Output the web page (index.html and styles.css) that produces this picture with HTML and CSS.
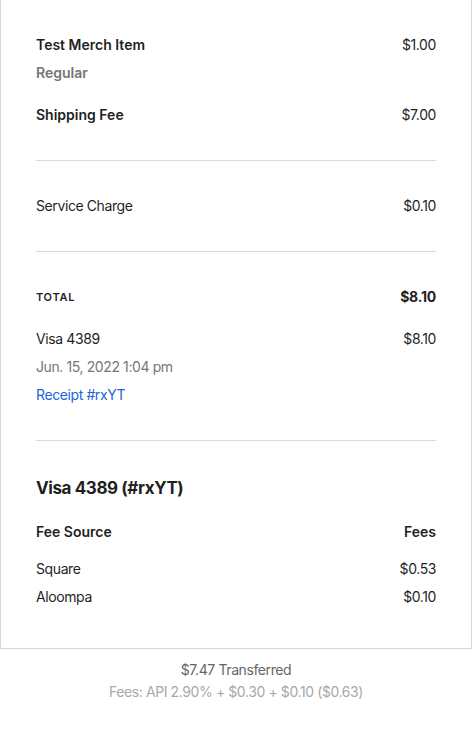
FILE: index.html
```html
<!DOCTYPE html>
<html>
<head>
<meta charset="utf-8">
<link rel="stylesheet" href="styles.css">
</head>
<body>
<div class="card">
  <section class="section">
    <div class="row strong"><span>Test Merch Item</span><span class="amt">$1.00</span></div>
    <div class="row sub"><span>Regular</span></div>
    <div class="row strong gap-lg"><span>Shipping Fee</span><span class="amt">$7.00</span></div>
  </section>
  <section class="section">
    <div class="row"><span>Service Charge</span><span>$0.10</span></div>
  </section>
  <section class="section">
    <div class="row total"><span class="total-label">TOTAL</span><span class="total-amt">$8.10</span></div>
    <div class="row gap-lg"><span>Visa 4389</span><span>$8.10</span></div>
    <div class="row muted"><span>Jun. 15, 2022 1:04 pm</span></div>
    <div class="row"><a class="link" href="#">Receipt #rxYT</a></div>
  </section>
  <section class="section last">
    <h2 class="heading">Visa 4389 (#rxYT)</h2>
    <div class="row strong head-row"><span>Fee Source</span><span>Fees</span></div>
    <div class="row fee-first"><span>Square</span><span>$0.53</span></div>
    <div class="row"><span>Aloompa</span><span>$0.10</span></div>
  </section>
</div>
<div class="footer">
  <div class="transferred">$7.47 Transferred</div>
  <div class="fees">Fees: API 2.90% + $0.30 + $0.10 ($0.63)</div>
</div>
</body>
</html>
```
FILE: styles.css
```css
* { box-sizing: border-box; }
html, body { margin: 0; padding: 0; background: #fff; }
body {
  font-family: Inter, "Noto Sans", "Liberation Sans", sans-serif;
  font-size: 14px;
  line-height: 20px;
  color: #1f1f1f;
  letter-spacing: -0.4px;
}
.card {
  border: 1px solid #d6d6d6;
  border-top: none;
  padding: 0 35px;
}
.section {
  padding: 35px 0;
  border-top: 1px solid #d9d9d9;
  display: flex;
  flex-direction: column;
  gap: 8px;
}
.section:first-child { border-top: none; }
.section.last { padding-bottom: 41px; }
.row {
  display: flex;
  justify-content: space-between;
  align-items: center;
  height: 20px;
}
.strong { font-weight: 600; letter-spacing: 0; }
.strong .amt { font-weight: 400; letter-spacing: -0.4px; }
.sub { color: #767676; font-weight: 600; letter-spacing: 0; }
.gap-lg { margin-top: 14px; }
.total-label { font-size: 11px; font-weight: 600; letter-spacing: 0.7px; }
.total-amt { font-weight: 700; letter-spacing: -0.2px; }
.muted { color: #767676; }
.link { color: #1a66d9; text-decoration: none; }
.heading {
  margin: 0;
  font-size: 17px;
  line-height: 24px;
  font-weight: 700;
  letter-spacing: -0.4px;
}
.head-row { margin-top: 14px; }
.fee-first { margin-top: 9px; }
.footer {
  padding-top: 11px;
  text-align: center;
  display: flex;
  flex-direction: column;
  gap: 2px;
}
.transferred { color: #666; }
.fees { color: #a8a8a8; }
```
